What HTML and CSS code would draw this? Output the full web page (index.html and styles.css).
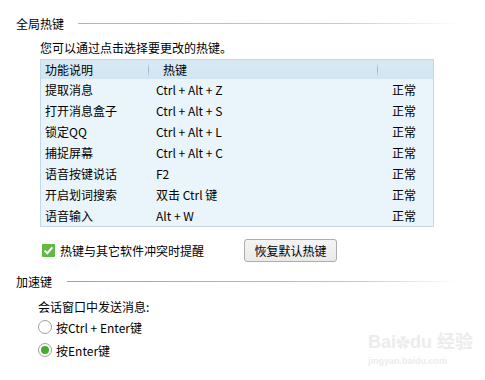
FILE: index.html
```html
<!DOCTYPE html>
<html lang="zh-CN">
<head>
    <meta charset="UTF-8">
    <meta name="viewport" content="width=device-width, initial-scale=1.0">
    <title>热键设置</title>
    <link rel="stylesheet" href="styles.css">
</head>
<body>
    <div class="page">
        <div class="section-head">
            <span class="section-title">全局热键</span>
            <span class="section-line"></span>
        </div>

        <p class="hint">您可以通过点击选择要更改的热键。</p>

        <table class="hotkeys">
            <thead>
                <tr>
                    <th class="col-name">功能说明</th>
                    <th class="col-key">热键</th>
                    <th class="col-state"></th>
                </tr>
            </thead>
            <tbody>
                <tr><td>提取消息</td><td class="key">Ctrl + Alt + Z</td><td class="state">正常</td></tr>
                <tr><td>打开消息盒子</td><td class="key">Ctrl + Alt + S</td><td class="state">正常</td></tr>
                <tr><td>锁定QQ</td><td class="key">Ctrl + Alt + L</td><td class="state">正常</td></tr>
                <tr><td>捕捉屏幕</td><td class="key">Ctrl + Alt + C</td><td class="state">正常</td></tr>
                <tr><td>语音按键说话</td><td class="key">F2</td><td class="state">正常</td></tr>
                <tr><td>开启划词搜索</td><td class="key">双击 Ctrl 键</td><td class="state">正常</td></tr>
                <tr><td>语音输入</td><td class="key">Alt + W</td><td class="state">正常</td></tr>
            </tbody>
        </table>

        <div class="options">
            <label class="check">
                <span class="check-box">
                    <svg width="13" height="13" viewBox="0 0 13 13">
                        <path d="M2.6 6.6 L5.2 9.2 L10.4 3.4" fill="none" stroke="#fff" stroke-width="2"/>
                    </svg>
                </span>
                热键与其它软件冲突时提醒
            </label>
            <button class="btn">恢复默认热键</button>
        </div>

        <div class="section-head section-head-2">
            <span class="section-title">加速键</span>
            <span class="section-line line-blue"></span>
        </div>

        <p class="sub">会话窗口中发送消息:</p>
        <label class="radio"><span class="radio-dot"></span>按Ctrl + Enter键</label>
        <label class="radio"><span class="radio-dot on"></span>按Enter键</label>
    </div>

    <div class="watermark">
        <div class="wm-top">Bai<span class="wm-paw">&#10047;</span>du 经验</div>
        <div class="wm-url">jingyan.baidu.com</div>
    </div>
</body>
</html>
```

FILE: styles.css
```css
body {
    margin: 0;
    background-color: #fff;
    font-family: "Noto Sans CJK SC", "Noto Sans", sans-serif;
    font-size: 12px;
    color: #000;
}
.page {
    padding: 16px 25px 0 16px;
}
.section-head {
    display: flex;
    align-items: center;
    height: 16px;
}
.section-title {
    line-height: 16px;
}
.section-line {
    flex: 1;
    height: 1px;
    margin-left: 14px;
    margin-top: -1px;
    background: linear-gradient(to right, #9ab8d1, #b9cfe0 70%, #ffffff);
}
.line-blue {
    margin-left: 15px;
    background: linear-gradient(to right, #78acd4, #a6c9e4 70%, #ffffff);
}
.hint {
    margin: 8px 0 0 24px;
    line-height: 16px;
}
.hotkeys {
    margin: 3px 0 0 24px;
    width: 394px;
    border-collapse: collapse;
    border: 1px solid #c3d9ea;
    background-color: #eaf5fb;
    table-layout: fixed;
}
.hotkeys th {
    height: 19px;
    padding: 0;
    font-weight: normal;
    text-align: left;
    background: linear-gradient(to bottom, #d9e9f4, #d2e5f2);
    position: relative;
}
.hotkeys td {
    height: 21px;
    padding: 0;
    line-height: 21px;
}
.col-name {
    width: 103px;
    padding-left: 4px !important;
}
.col-key {
    width: 214px;
    padding-left: 15px !important;
}
.col-key::before,
.col-state::before {
    content: "";
    position: absolute;
    left: 0;
    top: 3px;
    height: 14px;
    width: 1px;
    background: linear-gradient(to bottom, #d2e5f2, #8fb2cc, #d2e5f2);
}
.hotkeys td:first-child {
    padding-left: 4px;
}
.key {
    padding-left: 8px !important;
}
.state {
    padding-left: 15px !important;
}
.options {
    display: flex;
    align-items: center;
    margin: 12px 0 0 26px;
}
.check {
    display: flex;
    align-items: center;
    gap: 5px;
}
.check-box {
    display: block;
    width: 13px;
    height: 13px;
    background-color: #63b946;
    border-radius: 1px;
}
.check-box svg {
    display: block;
}
.btn {
    margin-left: 40px;
    width: 93px;
    height: 23px;
    padding: 0;
    font-family: inherit;
    font-size: 12px;
    color: #000;
    background: linear-gradient(to bottom, #f4f4f4, #e9e9e9);
    border: 1px solid #adadad;
    border-radius: 3px;
}
.section-head-2 {
    margin-top: 12px;
}
.sub {
    margin: 9px 0 0 22px;
    line-height: 16px;
}
.radio {
    display: flex;
    align-items: center;
    gap: 4px;
    margin-left: 22px;
    height: 16px;
    margin-top: 4px;
}
.radio + .radio {
    margin-top: 7px;
}
.radio-dot {
    width: 12px;
    height: 12px;
    border: 1px solid #a0a0a0;
    border-radius: 50%;
    background: #fff;
    display: flex;
    align-items: center;
    justify-content: center;
}
.radio-dot.on::after {
    content: "";
    width: 8px;
    height: 8px;
    border-radius: 50%;
    background-color: #4aa82e;
}
.watermark {
    position: absolute;
    left: 368px;
    top: 330px;
    width: 95px;
    white-space: nowrap;
    color: #ececec;
    font-family: "Liberation Sans", "Noto Sans CJK SC", sans-serif;
    font-weight: bold;
}
.wm-top {
    font-size: 18px;
    line-height: 24px;
}
.wm-paw {
    font-size: 14px;
}
.wm-url {
    font-size: 9px;
    line-height: 12px;
}
```
